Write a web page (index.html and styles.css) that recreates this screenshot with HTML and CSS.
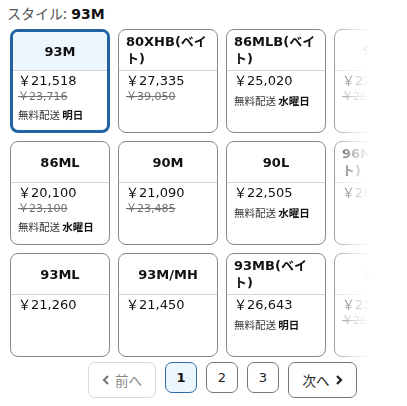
FILE: index.html
```html
<!DOCTYPE html>
<html lang="ja">
<head>
<meta charset="utf-8">
<link rel="stylesheet" href="styles.css">
</head>
<body>
<div class="page">
  <div class="style-label"><span class="lbl">スタイル:</span> <b>93M</b></div>
  <div class="grid-wrap">
    <div class="grid">
      <div class="card sel">
        <div class="head"><span>93M</span></div>
        <div class="body"><div class="price">￥21,518</div><div class="old">￥23,716</div><div class="ship">無料配送 <b>明日</b></div></div>
      </div>
      <div class="card">
        <div class="head"><span>80XHB(ベイト)</span></div>
        <div class="body"><div class="price">￥27,335</div><div class="old">￥39,050</div></div>
      </div>
      <div class="card">
        <div class="head"><span>86MLB(ベイト)</span></div>
        <div class="body"><div class="price">￥25,020</div><div class="ship">無料配送 <b>水曜日</b></div></div>
      </div>
      <div class="card">
        <div class="head"><span>93MH</span></div>
        <div class="body"><div class="price">￥22,980</div><div class="old">￥25,300</div></div>
      </div>

      <div class="card">
        <div class="head"><span>86ML</span></div>
        <div class="body"><div class="price">￥20,100</div><div class="old">￥23,100</div><div class="ship">無料配送 <b>水曜日</b></div></div>
      </div>
      <div class="card">
        <div class="head"><span>90M</span></div>
        <div class="body"><div class="price">￥21,090</div><div class="old">￥23,485</div></div>
      </div>
      <div class="card">
        <div class="head"><span>90L</span></div>
        <div class="body"><div class="price">￥22,505</div><div class="ship">無料配送 <b>水曜日</b></div></div>
      </div>
      <div class="card">
        <div class="head"><span>96MB(ベイト)</span></div>
        <div class="body"><div class="price">￥26,400</div></div>
      </div>

      <div class="card">
        <div class="head"><span>93ML</span></div>
        <div class="body"><div class="price">￥21,260</div></div>
      </div>
      <div class="card">
        <div class="head"><span>93M/MH</span></div>
        <div class="body"><div class="price">￥21,450</div></div>
      </div>
      <div class="card">
        <div class="head"><span>93MB(ベイト)</span></div>
        <div class="body"><div class="price">￥26,643</div><div class="ship">無料配送 <b>明日</b></div></div>
      </div>
      <div class="card">
        <div class="head"><span>100M</span></div>
        <div class="body"><div class="price">￥23,650</div><div class="old">￥25,960</div></div>
      </div>
    </div>
  </div>
  <div class="pager">
    <button class="nav prev"><svg width="8" height="10" viewBox="0 0 8 10"><path d="M6 1 L2 5 L6 9" fill="none" stroke="#777" stroke-width="2.2"/></svg>前へ</button>
    <button class="num cur">1</button>
    <button class="num">2</button>
    <button class="num">3</button>
    <button class="nav next">次へ<svg width="8" height="10" viewBox="0 0 8 10"><path d="M2 1 L6 5 L2 9" fill="none" stroke="#222" stroke-width="2.2"/></svg></button>
  </div>
</div>
</body>
</html>
```
FILE: styles.css
```css
* { box-sizing: border-box; }
html, body { margin: 0; padding: 0; background: #fff; }
body {
  font-family: "DejaVu Sans", "Noto Sans CJK JP", sans-serif;
  color: #111;
  width: 407px;
  height: 406px;
  overflow: hidden;
}
.page { width: 407px; overflow: hidden; }
.style-label {
  font-size: 14px;
  line-height: 20px;
  padding: 3px 0 0 7px;
  height: 29px;
}
.style-label .lbl { color: #555; font-family: "Noto Sans CJK JP", sans-serif; }
.style-label b { font-weight: bold; color: #111; }

.grid-wrap {
  width: 407px;
  overflow: hidden;
  -webkit-mask-image: linear-gradient(to right, #000 328px, rgba(0,0,0,0.35) 350px, transparent 369px);
  mask-image: linear-gradient(to right, #000 328px, rgba(0,0,0,0.35) 350px, transparent 369px);
}
.grid {
  display: grid;
  grid-template-columns: repeat(4, 100px);
  grid-auto-rows: 104px;
  gap: 8px;
  padding-left: 10px;
  width: 434px;
}
.card {
  border: 1px solid #8a8a8a;
  border-radius: 8px;
  overflow: hidden;
  display: flex;
  flex-direction: column;
  background: #fff;
}
.card.sel { border: 3px solid #2463a3; }
.head {
  height: 41px;
  flex: none;
  border-bottom: 1px solid #d4d4d4;
  display: flex;
  align-items: center;
  justify-content: center;
  padding: 0 7px;
  font-weight: bold;
  font-size: 13px;
  line-height: 17px;
  font-family: "DejaVu Sans", "Noto Sans CJK JP", sans-serif;
}
.card.sel .head { height: 39px; background: #ecf6fe; padding: 0 5px; }
.head span { text-align: left; }
.body { padding: 1px 7px 0; }
.card.sel .body { padding: 1px 5px 0 5px; }
.price { font-size: 13px; line-height: 18px; color: #111; }
.old {
  font-size: 11px;
  line-height: 14px;
  color: #707070;
  text-decoration: line-through;
  margin-bottom: 3px;
}
.ship {
  font-size: 10.5px;
  line-height: 14px;
  margin-top: 4px;
  color: #333;
  font-family: "Noto Sans CJK JP", sans-serif;
}
.ship b { color: #111; font-weight: bold; }

.pager {
  width: 407px;
  padding-left: 38px;
  margin-top: 5px;
  display: flex;
  justify-content: center;
  align-items: flex-start;
  gap: 9px;
}
.pager button {
  font-family: "DejaVu Sans", "Noto Sans CJK JP", sans-serif;
  background: #fff;
  padding: 0;
  margin: 0;
  display: flex;
  align-items: center;
  justify-content: center;
  cursor: pointer;
}
.nav {
  height: 36px;
  border-radius: 7px;
  font-size: 13.5px;
  gap: 5px;
  font-family: "Noto Sans CJK JP", sans-serif;
}
.prev { width: 68px; border: 1px solid #d8d8d8; color: #8a8a8a; }
.next { width: 69px; border: 1px solid #777; color: #222; }
.num {
  width: 32px;
  height: 31px;
  border: 1px solid #777;
  border-radius: 7px;
  font-size: 13px;
  color: #222;
}
.num.cur { border-color: #2f6ba8; background: #ecf6fe; font-weight: bold; color: #111; }
```
